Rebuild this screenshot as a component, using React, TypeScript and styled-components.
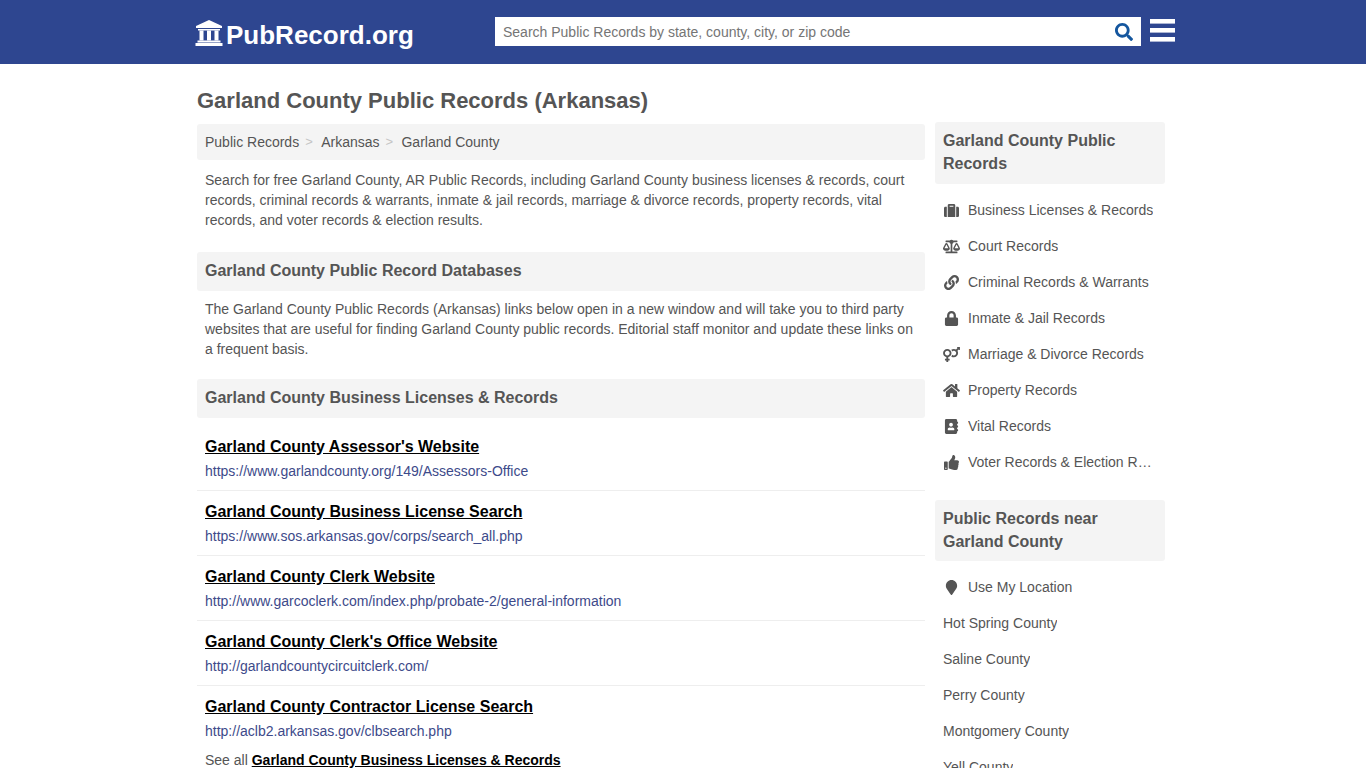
import React from "react";
import styled, { createGlobalStyle } from "styled-components";
import {
  FaAddressBook,
  FaBalanceScale,
  FaHome,
  FaLink,
  FaLock,
  FaMapMarker,
  FaSearch,
  FaSuitcase,
  FaThumbsUp,
  FaVenusMars,
} from "react-icons/fa";

const GlobalStyle = createGlobalStyle`
  html, body {
    margin: 0;
    padding: 0;
    height: 100%;
    overflow: hidden;
    background: #fff;
  }
  body {
    font-family: "Liberation Sans", Arial, sans-serif;
    font-size: 14px;
    line-height: 20px;
    color: #555;
  }
`;

const Header = styled.header`
  height: 64px;
  background: #2e4690;
`;

const HeaderInner = styled.div`
  width: 980px;
  margin-left: 195px;
  height: 64px;
  display: flex;
  align-items: flex-start;
`;

const Logo = styled.a`
  width: 300px;
  display: flex;
  align-items: center;
  gap: 3px;
  height: 64px;
  color: #fff;
  font-size: 26px;
  font-weight: bold;
  line-height: 64px;
  padding-top: 5px;
  box-sizing: border-box;
  svg {
    width: 28px;
    height: 26px;
    margin-top: -4px;
  }
`;

const SearchBox = styled.div`
  margin-top: 17px;
  width: 646px;
  height: 29px;
  background: #fff;
  display: flex;
  align-items: center;
  justify-content: space-between;
  padding: 0 8px;
  box-sizing: border-box;
  font-size: 14px;
  color: #757575;
  svg {
    width: 18px;
    height: 18px;
    color: #14569e;
    margin-top: 1px;
  }
`;

const MenuButton = styled.div`
  margin: 19px 0 0 9px;
  display: flex;
  svg {
    width: 25px;
    height: 23px;
    fill: #fff;
  }
`;

const Page = styled.div`
  width: 968px;
  margin-left: 197px;
  display: grid;
  grid-template-columns: 728px 230px;
  column-gap: 10px;
  align-items: start;
`;

const Main = styled.main`
  min-width: 0;
`;

const Title = styled.h1`
  margin: 0;
  height: 60px;
  font-size: 22px;
  line-height: 74px;
  font-weight: bold;
  color: #555;
`;

const Crumbs = styled.nav`
  height: 36px;
  background: #f4f4f4;
  border-radius: 3px;
  padding: 0 8px;
  display: flex;
  align-items: center;
`;

const Crumb = styled.a``;

const CrumbSep = styled.span`
  color: #c4c4c4;
  margin: 0 8.4px 0 6px;
  font-size: 13px;
`;

const Para = styled.p<{ $top: number; $after: number }>`
  margin: 0 0 ${(p) => p.$after}px;
  padding: ${(p) => p.$top}px 8px 0;
`;

const SectionHead = styled.h2<{ $after: number }>`
  margin: 0 0 ${(p) => p.$after}px;
  height: 39px;
  background: #f4f4f4;
  border-radius: 3px;
  padding: 0 8px;
  font-size: 16px;
  line-height: 37px;
  font-weight: bold;
  color: #555;
`;

const LinkRow = styled.div<{ $last?: boolean }>`
  height: 62px;
  padding: 0 8px;
  margin-bottom: ${(p) => (p.$last ? 0 : 2)}px;
  border-bottom: ${(p) => (p.$last ? "none" : "1px solid #eee")};
`;

const LinkTitle = styled.a`
  display: block;
  padding-top: 7px;
  height: 33px;
  box-sizing: border-box;
  line-height: 24px;
  font-size: 16px;
  font-weight: bold;
  color: #000;
  text-decoration: underline;
`;

const LinkUrl = styled.div`
  color: #3d4a8a;
  line-height: 20px;
`;

const SeeAll = styled.div`
  padding: 0 8px;
  line-height: 20px;
  strong {
    color: #000;
    text-decoration: underline;
  }
`;

const Side = styled.aside`
  min-width: 0;
  padding-top: 58px;
`;

const SideHead = styled.h3<{ $bottom: number }>`
  margin: 0 0 8px;
  background: #f4f4f4;
  border-radius: 3px;
  padding: 7px 8px ${(p) => p.$bottom}px;
  font-size: 16px;
  line-height: 23px;
  font-weight: bold;
  color: #555;
`;

const SideList = styled.ul`
  list-style: none;
  margin: 0 0 20px;
  padding: 0;
`;

const SideItem = styled.li`
  height: 36px;
  padding: 0 8px;
  display: flex;
  align-items: center;
  white-space: nowrap;
  overflow: hidden;
`;

const SideIcon = styled.span`
  flex: none;
  width: 25px;
  display: flex;
  justify-content: flex-start;
  svg {
    width: 17px;
    height: 15px;
    color: #555;
  }
`;

const SideLabel = styled.span`
  overflow: hidden;
  text-overflow: ellipsis;
  min-width: 0;
`;

const BuildingIcon = () => (
  <svg viewBox="0 0 28 26" fill="#fff" aria-hidden="true">
    <path d="M14 0 L27 6 V8 H1 V6 Z" />
    <rect x="3" y="9" width="22" height="1.5" />
    <rect x="4.5" y="10.5" width="4" height="10" />
    <rect x="12" y="10.5" width="4" height="10" />
    <rect x="19.5" y="10.5" width="4" height="10" />
    <rect x="2.5" y="20.5" width="23" height="2" />
    <rect x="0.5" y="23" width="27" height="3" />
  </svg>
);

const MenuIcon = () => (
  <svg viewBox="0 0 25 23" aria-hidden="true">
    <rect y="0" width="25" height="4.6" />
    <rect y="9" width="25" height="4.6" />
    <rect y="18" width="25" height="4.6" />
  </svg>
);

const records = [
  { icon: <FaSuitcase />, label: "Business Licenses & Records" },
  { icon: <FaBalanceScale />, label: "Court Records" },
  { icon: <FaLink />, label: "Criminal Records & Warrants" },
  { icon: <FaLock />, label: "Inmate & Jail Records" },
  { icon: <FaVenusMars />, label: "Marriage & Divorce Records" },
  { icon: <FaHome />, label: "Property Records" },
  { icon: <FaAddressBook />, label: "Vital Records" },
  { icon: <FaThumbsUp />, label: "Voter Records & Election Results" },
];

const counties = [
  "Hot Spring County",
  "Saline County",
  "Perry County",
  "Montgomery County",
  "Yell County",
];

const links = [
  ["Garland County Assessor's Website", "https://www.garlandcounty.org/149/Assessors-Office"],
  ["Garland County Business License Search", "https://www.sos.arkansas.gov/corps/search_all.php"],
  ["Garland County Clerk Website", "http://www.garcoclerk.com/index.php/probate-2/general-information"],
  ["Garland County Clerk's Office Website", "http://garlandcountycircuitclerk.com/"],
  ["Garland County Contractor License Search", "http://aclb2.arkansas.gov/clbsearch.php"],
];

export default function App() {
  return (
    <>
      <GlobalStyle />
      <Header>
        <HeaderInner>
          <Logo>
            <BuildingIcon />
            PubRecord.org
          </Logo>
          <SearchBox>
            Search Public Records by state, county, city, or zip code
            <FaSearch />
          </SearchBox>
          <MenuButton>
            <MenuIcon />
          </MenuButton>
        </HeaderInner>
      </Header>
      <Page>
        <Main>
          <Title>Garland County Public Records (Arkansas)</Title>
          <Crumbs>
            <Crumb>Public Records</Crumb>
            <CrumbSep>&gt;</CrumbSep>
            <Crumb>Arkansas</Crumb>
            <CrumbSep>&gt;</CrumbSep>
            <Crumb>Garland County</Crumb>
          </Crumbs>
          <Para $top={10} $after={22}>
            Search for free Garland County, AR Public Records, including Garland County business licenses &amp; records,
            court records, criminal records &amp; warrants, inmate &amp; jail records, marriage &amp; divorce records,
            property records, vital records, and voter records &amp; election results.
          </Para>
          <SectionHead $after={8}>Garland County Public Record Databases</SectionHead>
          <Para $top={0} $after={20}>
            The Garland County Public Records (Arkansas) links below open in a new window and will take you to third
            party websites that are useful for finding Garland County public records. Editorial staff monitor and update
            these links on a frequent basis.
          </Para>
          <SectionHead $after={10}>Garland County Business Licenses &amp; Records</SectionHead>
          {links.map(([title, url], i) => (
            <LinkRow key={title} $last={i === links.length - 1}>
              <LinkTitle>{title}</LinkTitle>
              <LinkUrl>{url}</LinkUrl>
            </LinkRow>
          ))}
          <SeeAll>
            See all <strong>Garland County Business Licenses &amp; Records</strong>
          </SeeAll>
        </Main>
        <Side>
          <SideHead $bottom={9}>Garland County Public Records</SideHead>
          <SideList>
            {records.map((r) => (
              <SideItem key={r.label}>
                <SideIcon>{r.icon}</SideIcon>
                <SideLabel>{r.label}</SideLabel>
              </SideItem>
            ))}
          </SideList>
          <SideHead $bottom={8}>Public Records near Garland County</SideHead>
          <SideList>
            <SideItem>
              <SideIcon>
                <FaMapMarker />
              </SideIcon>
              <SideLabel>Use My Location</SideLabel>
            </SideItem>
            {counties.map((c) => (
              <SideItem key={c}>
                <SideLabel>{c}</SideLabel>
              </SideItem>
            ))}
          </SideList>
        </Side>
      </Page>
    </>
  );
}
